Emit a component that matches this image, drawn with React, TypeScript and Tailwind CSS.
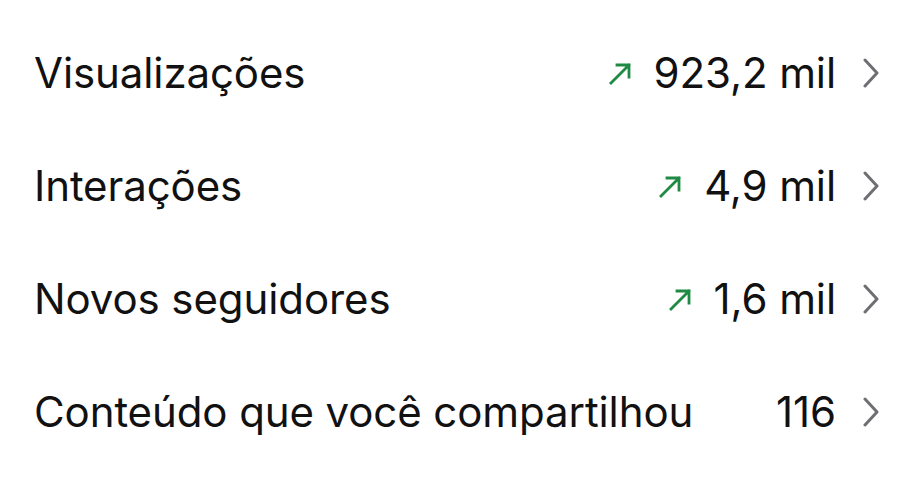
const stats = [
  { label: "Visualizações", value: "923,2 mil", up: true },
  { label: "Interações", value: "4,9 mil", up: true },
  { label: "Novos seguidores", value: "1,6 mil", up: true },
  { label: "Conteúdo que você compartilhou", value: "116", up: false },
];

function TrendUp() {
  return (
    <svg width="26" height="26" viewBox="0 0 26 26" fill="none" className="text-[#1e8a43]">
      <path d="M3 23L21 5M9 5H21V17" stroke="currentColor" strokeWidth="2.8" strokeLinecap="square" />
    </svg>
  );
}

function Chevron() {
  return (
    <svg width="18" height="30" viewBox="0 0 18 30" fill="none" className="text-[#6e6e73]">
      <path d="M3 2L15 15L3 28" stroke="currentColor" strokeWidth="3" strokeLinecap="round" strokeLinejoin="round" />
    </svg>
  );
}

export default function App() {
  return (
    <div className="h-[486px] w-[920px] bg-white pt-[16px] pl-[34px] pr-[40px] font-['Inter',sans-serif] text-[42px] text-[#111]">
      {stats.map((s) => (
        <div key={s.label} className="flex h-[113px] items-center">
          <span className="flex-1 tracking-[-0.1px]">{s.label}</span>
          {s.up && (
            <span className="mr-[20px] flex">
              <TrendUp />
            </span>
          )}
          <span className="tracking-[-0.1px]">{s.value}</span>
          <span className="ml-[26px] flex">
            <Chevron />
          </span>
        </div>
      ))}
    </div>
  );
}
